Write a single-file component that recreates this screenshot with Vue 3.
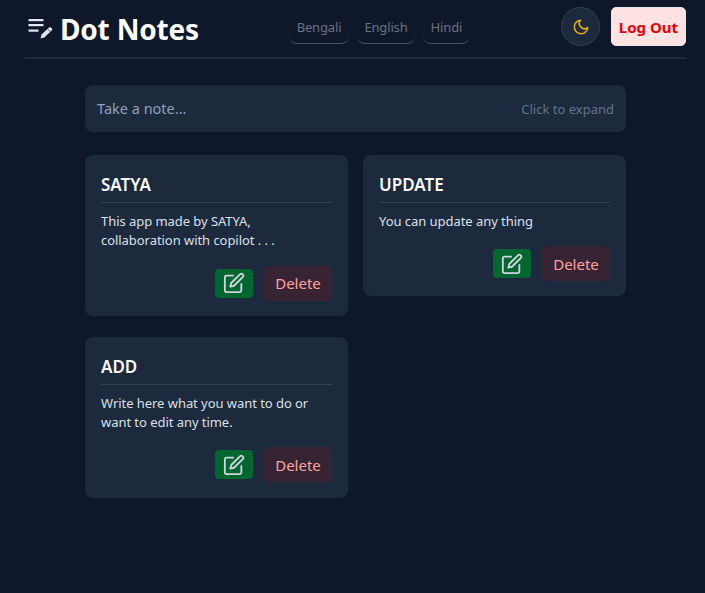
<script setup>
const left = [
  { title: 'SATYA', body: ['This app made by SATYA,', 'collaboration with copilot . . .'] },
  { title: 'ADD', body: ['Write here what you want to do or', 'want to edit any time.'] }
]
const right = [{ title: 'UPDATE', body: ['You can update any thing'] }]
const columns = [left, right]
const langs = ['Bengali', 'English', 'Hindi']
</script>

<template>
  <div class="page">
    <header class="header">
      <div class="brand">
        <svg class="logo" width="26" height="22" viewBox="0 0 26 22" fill="none">
          <rect x="0.5" y="0" width="15" height="2.2" fill="#e2e8f0" />
          <rect x="0.5" y="5" width="15" height="2.2" fill="#e2e8f0" />
          <rect x="0.5" y="10.5" width="10" height="2.2" fill="#e2e8f0" />
          <path d="M12.5 19.5l1-4 7.5-7c.5-.5 1.2-.5 1.7 0l1.2 1.1c.5.5.5 1.2 0 1.7l-7.6 7.1-3.8 1.1z" fill="#e2e8f0" />
          <path d="M19.4 9.9l3 2.9" stroke="#0f172b" stroke-width="0.7" />
        </svg>
        <h1 class="title">Dot Notes</h1>
      </div>
      <nav class="langs">
        <button v-for="l in langs" :key="l" class="lang">{{ l }}</button>
      </nav>
      <div class="actions">
        <button class="theme">
          <svg width="18" height="18" viewBox="0 0 24 24" fill="none" stroke="#f0b100" stroke-width="2" stroke-linecap="round" stroke-linejoin="round">
            <path d="M21 12.8A9 9 0 1 1 11.2 3a7 7 0 0 0 9.8 9.8z" />
          </svg>
        </button>
        <button class="logout">Log Out</button>
      </div>
    </header>

    <main class="main">
      <div class="composer">
        <span class="placeholder">Take a note...</span>
        <span class="hint">Click to expand</span>
      </div>
      <div class="columns">
        <div v-for="(col, i) in columns" :key="i" class="column">
          <article v-for="n in col" :key="n.title" class="card">
            <h2 class="card-title">{{ n.title }}</h2>
            <p class="card-body">
              <span v-for="line in n.body" :key="line" class="line">{{ line }}</span>
            </p>
            <div class="card-actions">
              <button class="edit">
                <svg width="22" height="22" viewBox="0 0 24 24" fill="none" stroke="#d1d5dc" stroke-width="2" stroke-linecap="round" stroke-linejoin="round">
                  <path d="M11 4H4a2 2 0 0 0-2 2v14a2 2 0 0 0 2 2h14a2 2 0 0 0 2-2v-7" />
                  <path d="M18.5 2.5a2.1 2.1 0 0 1 3 3L12 15l-4 1 1-4 9.5-9.5z" />
                </svg>
              </button>
              <button class="delete">Delete</button>
            </div>
          </article>
        </div>
      </div>
    </main>
  </div>
</template>

<style>
html, body { margin: 0; background: #0f172b; }
</style>

<style scoped>
.page {
  min-height: 593px;
  box-sizing: border-box;
  background: #0f172b;
  font-family: "Noto Sans", "Open Sans", sans-serif;
  padding: 0 19px 0 25px;
}
button { font-family: inherit; cursor: pointer; }
.header {
  box-sizing: border-box;
  border-bottom: 2px solid #1d293d;
  height: 59px;
  display: flex;
  align-items: flex-start;
  justify-content: space-between;
}
.brand { display: flex; align-items: center; gap: 6px; margin-top: 9px; margin-left: 3px; }
.logo { margin-top: 2px; }
.title { margin: 0; font-size: 28px; line-height: 40px; font-weight: 700; color: #fff; letter-spacing: -0.2px; }
.langs { display: flex; gap: 8px; margin-top: 11px; margin-right: 1px; }
.lang {
  background: transparent;
  border: none;
  border-bottom: 1px solid #4a5565;
  border-radius: 0 0 8px 8px;
  color: #6a7282;
  font-size: 13px;
  letter-spacing: -0.15px;
  height: 33px;
  padding: 0 7.5px;
}
.actions { display: flex; align-items: center; gap: 11px; margin-top: 7px; }
.theme {
  width: 39px; height: 39px; border-radius: 50%;
  background: #1d293d; border: 1px solid #314158;
  display: flex; align-items: center; justify-content: center; padding: 0;
}
.logout {
  width: 75px; height: 39px;
  background: #ffe2e2; color: #e7000b; border: 1px solid #e5e7eb; border-radius: 5px;
  font-size: 15px; font-weight: 700; padding: 0;
}
.main { width: 541px; margin: 26px 0 0 60px; }
.composer {
  height: 47px; box-sizing: border-box; background: #1d293d; border-radius: 8px;
  display: flex; align-items: center; justify-content: space-between; padding: 0 12px;
}
.placeholder { color: #90a1b9; font-size: 14.5px; padding-bottom: 2px; }
.hint { color: #62748e; font-size: 13px; }
.columns { display: flex; gap: 15px; margin-top: 23px; align-items: flex-start; }
.column { width: 263px; display: flex; flex-direction: column; gap: 21px; }
.card { background: #1d293d; border-radius: 8px; padding: 16px 16px 15.25px; box-sizing: border-box; }
.card-title {
  margin: 0; font-size: 17px; line-height: 28px; font-weight: 600; color: #f8fafc;
  border-bottom: 1px solid #314158; height: 32px; box-sizing: border-box;
}
.card-body { margin: 8.75px 0 0; font-size: 13px; line-height: 19.5px; color: #d8e0ea; letter-spacing: -0.05px; }
.line { display: block; }
.card-actions { display: flex; justify-content: flex-end; align-items: center; gap: 11px; margin-top: 14.75px; }
.edit {
  width: 38px; height: 29px; background: #016630; border: none; border-radius: 4px;
  display: flex; align-items: center; justify-content: center; padding: 0;
}
.delete {
  width: 68px; height: 35px; background: #372433; color: #ffa2a2; border: none; border-radius: 5px;
  font-size: 15px; padding: 0;
}
</style>
